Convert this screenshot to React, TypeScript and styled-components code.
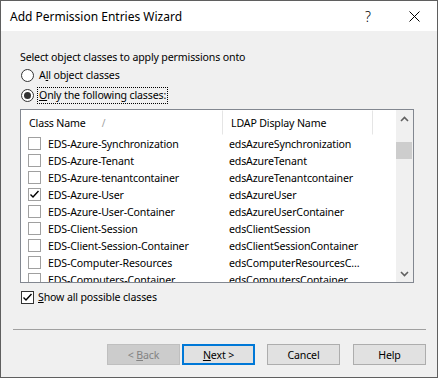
import React from 'react';
import styled, { createGlobalStyle } from 'styled-components';

const GlobalStyle = createGlobalStyle`
    html, body {
        margin: 0;
        padding: 0;
        background: #f0f0f0;
    }
    * {
        box-sizing: border-box;
    }
`;

const Window = styled.div`
    width: 438px;
    height: 378px;
    border: 1px solid #5f5f5f;
    display: flex;
    flex-direction: column;
    background: #f0f0f0;
    font-family: 'Noto Sans', 'Open Sans', sans-serif;
    font-size: 10.6px;
    letter-spacing: -0.15px;
    color: #000;
`;

const TitleBar = styled.div`
    height: 30px;
    background: #fff;
    display: flex;
    align-items: center;
    padding-left: 9px;
`;

const TitleText = styled.div`
    flex: 1;
    font-size: 12px;
    letter-spacing: 0;
`;

const CaptionButton = styled.div`
    width: 46px;
    height: 30px;
    display: flex;
    align-items: center;
    justify-content: center;
    font-size: 14px;
    font-weight: 300;
`;

const Content = styled.div`
    display: flex;
    flex-direction: column;
    padding: 18px 23px 0 19px;
`;

const Intro = styled.div`
    height: 16px;
    line-height: 16px;
`;

const OptionRow = styled.label`
    height: 20px;
    display: flex;
    align-items: center;
    gap: 3px;
    padding-left: 1px;
`;

const Radio = styled.span<{ $checked?: boolean }>`
    width: 13px;
    height: 13px;
    border-radius: 50%;
    border: 1px solid #333;
    background: #fff;
    display: flex;
    align-items: center;
    justify-content: center;
    &::after {
        content: '';
        display: ${p => (p.$checked ? 'block' : 'none')};
        width: 7px;
        height: 7px;
        border-radius: 50%;
        background: #333;
    }
`;

const OptionLabel = styled.span<{ $focused?: boolean }>`
    line-height: 15px;
    padding: 0 1px;
    border: 1px dotted ${p => (p.$focused ? '#000' : 'transparent')};
`;

const ListBox = styled.div`
    margin-top: 4px;
    height: 174px;
    border: 1px solid #828790;
    background: #fff;
    display: flex;
    overflow: hidden;
`;

const ListBody = styled.div`
    flex: 1;
    display: flex;
    flex-direction: column;
    overflow: hidden;
`;

const Header = styled.div`
    height: 25px;
    display: flex;
    flex-shrink: 0;
`;

const HeaderCell = styled.div<{ $width: number }>`
    width: ${p => p.$width}px;
    height: 25px;
    display: flex;
    align-items: center;
    padding-left: 8px;
    border-right: 1px solid #e5e5e5;
    border-top: 1px solid transparent;
    border-bottom: 1px solid transparent;
    background-clip: padding-box;
`;

const SortMark = styled.span`
    color: #a0a0a0;
    font-size: 10px;
    margin-left: 16px;
`;

const Row = styled.div`
    height: 17px;
    display: flex;
    align-items: center;
    flex-shrink: 0;
`;

const NameCell = styled.div`
    width: 201px;
    display: flex;
    align-items: center;
    padding-left: 7px;
    gap: 7px;
    white-space: nowrap;
`;

const LdapCell = styled.div`
    width: 150px;
    padding-left: 7px;
    white-space: nowrap;
    overflow: hidden;
`;

const Box = styled.span<{ $dark?: boolean }>`
    width: 13px;
    height: 13px;
    flex-shrink: 0;
    border: 1px solid ${p => (p.$dark ? '#333' : '#a0a0a0')};
    background: #fff;
    display: flex;
    align-items: center;
    justify-content: center;
`;

const ScrollBar = styled.div`
    width: 17px;
    background: #f0f0f0;
    display: flex;
    flex-direction: column;
`;

const ScrollArrow = styled.div`
    height: 17px;
    display: flex;
    align-items: center;
    justify-content: center;
`;

const Track = styled.div`
    flex: 1;
    padding-top: 15px;
`;

const Thumb = styled.div`
    height: 17px;
    margin: 0 1px 0 0;
    background: #cdcdcd;
`;

const ShowAllRow = styled.label`
    margin-top: 5px;
    height: 18px;
    display: flex;
    align-items: center;
    gap: 4px;
    padding-left: 1px;
`;

const Footer = styled.div`
    margin-top: 23px;
    padding: 0 11px 0 12px;
    display: flex;
    flex-direction: column;
`;

const Separator = styled.div`
    height: 1px;
    background: #a0a0a0;
`;

const ButtonRow = styled.div`
    margin-top: 14px;
    display: flex;
    justify-content: flex-end;
`;

const Button = styled.button<{ $gap?: number; $primary?: boolean }>`
    width: 73px;
    height: 21px;
    margin-left: ${p => p.$gap ?? 0}px;
    font-family: inherit;
    font-size: 10.6px;
    letter-spacing: -0.15px;
    padding: 0;
    color: #000;
    background: #e1e1e1;
    border: ${p => (p.$primary ? '2px solid #0078d7' : '1px solid #adadad')};
    &:disabled {
        background: #cccccc;
        border-color: #bfbfbf;
        color: #838383;
    }
`;

const Check = () => (
    <svg width="11" height="11" viewBox="0 0 11 11">
        <polyline points="1.5,5.5 4,8 9.5,2" fill="none" stroke="#000" strokeWidth="1.4" />
    </svg>
);

const Chevron = ({ up }: { up?: boolean }) => (
    <svg width="9" height="6" viewBox="0 0 9 6">
        <polyline
            points={up ? '1,5 4.5,1.5 8,5' : '1,1 4.5,4.5 8,1'}
            fill="none"
            stroke="#606060"
            strokeWidth="1.6"
        />
    </svg>
);

const rows: [string, string, boolean][] = [
    ['EDS-Azure-Synchronization', 'edsAzureSynchronization', false],
    ['EDS-Azure-Tenant', 'edsAzureTenant', false],
    ['EDS-Azure-tenantcontainer', 'edsAzureTenantcontainer', false],
    ['EDS-Azure-User', 'edsAzureUser', true],
    ['EDS-Azure-User-Container', 'edsAzureUserContainer', false],
    ['EDS-Client-Session', 'edsClientSession', false],
    ['EDS-Client-Session-Container', 'edsClientSessionContainer', false],
    ['EDS-Computer-Resources', 'edsComputerResourcesC…', false],
    ['EDS-Computers-Container', 'edsComputersContainer', false],
];

export default function App() {
    return (
        <>
            <GlobalStyle />
            <Window>
                <TitleBar>
                    <TitleText>Add Permission Entries Wizard</TitleText>
                    <CaptionButton>?</CaptionButton>
                    <CaptionButton>
                        <svg width="11" height="11" viewBox="0 0 11 11">
                            <path d="M0.5 0.5 L10.5 10.5 M10.5 0.5 L0.5 10.5" stroke="#000" strokeWidth="1" />
                        </svg>
                    </CaptionButton>
                </TitleBar>
                <Content>
                    <Intro>Select object classes to apply permissions onto</Intro>
                    <OptionRow>
                        <Radio />
                        <OptionLabel>
                            A<u>l</u>l object classes
                        </OptionLabel>
                    </OptionRow>
                    <OptionRow>
                        <Radio $checked />
                        <OptionLabel $focused>
                            <u>O</u>nly the following classes:
                        </OptionLabel>
                    </OptionRow>
                    <ListBox>
                        <ListBody>
                            <Header>
                                <HeaderCell $width={202}>
                                    Class Name<SortMark>/</SortMark>
                                </HeaderCell>
                                <HeaderCell $width={150}>LDAP Display Name</HeaderCell>
                            </Header>
                            {rows.map(([name, ldap, checked]) => (
                                <Row key={name}>
                                    <NameCell>
                                        <Box>{checked && <Check />}</Box>
                                        {name}
                                    </NameCell>
                                    <LdapCell>{ldap}</LdapCell>
                                </Row>
                            ))}
                        </ListBody>
                        <ScrollBar>
                            <ScrollArrow>
                                <Chevron up />
                            </ScrollArrow>
                            <Track>
                                <Thumb />
                            </Track>
                            <ScrollArrow>
                                <Chevron />
                            </ScrollArrow>
                        </ScrollBar>
                    </ListBox>
                    <ShowAllRow>
                        <Box $dark>
                            <Check />
                        </Box>
                        <span>
                            <u>S</u>how all possible classes
                        </span>
                    </ShowAllRow>
                </Content>
                <Footer>
                    <Separator />
                    <ButtonRow>
                        <Button disabled>
                            &lt; <u>B</u>ack
                        </Button>
                        <Button $primary $gap={2}>
                            <u>N</u>ext &gt;
                        </Button>
                        <Button $gap={12}>Cancel</Button>
                        <Button $gap={13}>Help</Button>
                    </ButtonRow>
                </Footer>
            </Window>
        </>
    );
}
